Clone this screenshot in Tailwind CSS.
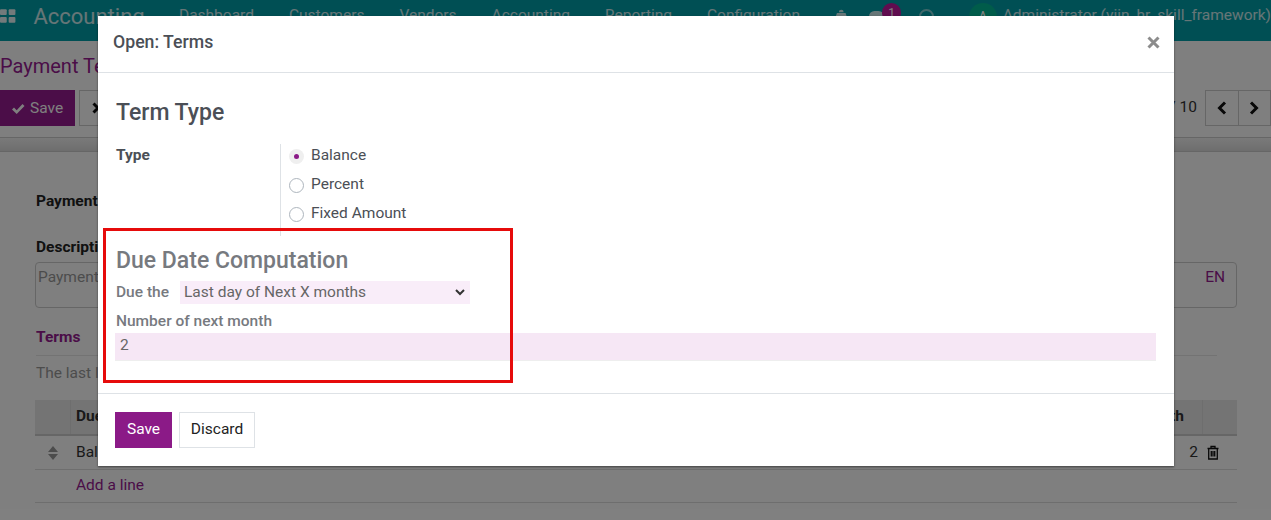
<!DOCTYPE html>
<html lang="en">

<head>
  <meta charset="UTF-8">
  <meta name="viewport" content="width=device-width, initial-scale=1.0">
  <script src="https://cdn.jsdelivr.net/npm/@tailwindcss/browser@4"></script>
  <title>Open: Terms</title>
</head>

<body class="font-['Roboto',sans-serif] text-[15.5px] text-[#4b4f56] bg-white">
  <div class="relative w-[1271px] h-[520px] overflow-hidden">

    <!-- page behind the dialog -->
    <header class="flex items-center h-[41px] bg-[#009ea9] text-white/80 pb-[9px]">
      <svg class="w-[17px] h-[14px] text-white/90" viewBox="0 0 17 14" fill="currentColor">
        <rect x="0" y="0" width="7" height="6" rx="1" />
        <rect x="9" y="0" width="7" height="6" rx="1" />
        <rect x="0" y="8" width="7" height="6" rx="1" />
        <rect x="9" y="8" width="7" height="6" rx="1" />
      </svg>
      <span class="ml-[17px] text-[22px] w-[146px]">Accounting</span>
      <nav class="flex gap-[35px] ml-[5px]">
        <span>Dashboard</span>
        <span>Customers</span>
        <span>Vendors</span>
        <span>Accounting</span>
        <span>Reporting</span>
        <span>Configuration</span>
      </nav>
      <svg class="ml-[35px] w-[13px] h-[14px] text-white/80" viewBox="0 0 13 14" fill="currentColor"><path d="M4 3a2.500 2.500 0 0 1 5 0zM2 4h9l1 3-1 1 1 3-2 0-1.500 2h-4L3 11H1l1-3-1-1z" /></svg>
      <span class="ml-[22px] w-[15px] h-[11px] rounded-full bg-white/80"></span>
      <span class="ml-[-2px] w-[20px] h-[20px] mt-[-6px] rounded-full bg-[#c0189f] text-white text-[12px] flex items-center justify-center">1</span>
      <span class="ml-[18px] w-[15px] h-[15px] rounded-full border-2 border-white/50"></span>
      <span class="ml-[35px] w-[29px] h-[29px] mt-[3px] rounded-full bg-[#00b894] text-white text-[14px] flex items-center justify-center">A</span>
      <span class="ml-[6px] whitespace-nowrap">Administrator (viin_hr_skill_framework)</span>
    </header>

    <section class="h-[110px] bg-white">
      <div class="text-[#961a90] text-[20px] h-[49px] pt-[10px] whitespace-nowrap">Payment Terms</div>
      <div class="flex items-center h-[36px]">
        <span class="flex items-center gap-[5px] h-[36px] w-[75px] pl-[11px] pt-[1px] bg-[#961a90] text-white">
          <svg class="w-[14px] h-[12px]" viewBox="0 0 14 12" fill="currentColor"><path d="M1 6.500l2-2 2.700 2.700L11.500 1l2 2-7.800 8z" /></svg>
          Save
        </span>
        <span class="ml-[4px] flex items-center h-[36px] w-[60px] pl-[12px] border border-[#ccc] bg-white">
          <svg class="w-[12px] h-[12px] text-[#111]" viewBox="0 0 12 12" fill="none" stroke="currentColor" stroke-width="3"><path d="M1.500 1.500l9 9M10.500 1.500l-9 9" /></svg>
        </span>
        <span class="ml-auto text-[#333]">/ 10</span>
        <span class="ml-[8px] flex h-[36px] w-[66px] border border-[#ccc] bg-white text-[#111]">
          <span class="flex-1 flex items-center justify-center border-r border-[#ccc]">
            <svg class="w-[10px] h-[14px]" viewBox="0 0 10 14" fill="none" stroke="currentColor" stroke-width="3"><path d="M8 1.500L2.500 7 8 12.500" /></svg>
          </span>
          <span class="flex-1 flex items-center justify-center">
            <svg class="w-[10px] h-[14px]" viewBox="0 0 10 14" fill="none" stroke="currentColor" stroke-width="3"><path d="M2 1.500L7.500 7 2 12.500" /></svg>
          </span>
        </span>
      </div>
      <div class="mt-[11px] h-[15px] border-y border-[#ccc] bg-[linear-gradient(#f4f4f4,#dcdcdc)]"></div>
    </section>

    <main class="ml-[36px] mr-[34px] pt-[39px]">
      <div class="font-bold text-[#222]">Payment Terms</div>
      <div class="mt-[23px] font-bold text-[#222]">Description</div>
      <div class="ml-[-1px] mt-[2px] h-[46px] flex justify-between border border-[#ccc] rounded-[4px] px-[2px] pt-[3px] text-[#999]">
        <span>Payment terms</span>
        <span class="text-[#961a90] pr-[9px]">EN</span>
      </div>
      <div class="mt-[18px] pb-[6px] font-bold text-[#961a90] border-b border-[#e6e6e6] mr-[20px]">Terms</div>
      <div class="mt-[6px] text-[#999]">The last line's computation type should be Balance</div>
      <div class="ml-[-1px] mt-[15px] flex h-[36px] items-center bg-[#e9e9e9] border-b-2 border-[#ccc] font-bold text-[#333]">
        <span class="w-[36px] h-full border-r border-[#ddd]"></span>
        <span class="ml-[5px]">Due Type</span>
        <span class="ml-auto mr-[-1px]">Number of next month</span>
        <span class="ml-[19px] w-[35px] h-full border-l border-[#ddd]"></span>
      </div>
      <div class="ml-[-1px] flex h-[34px] items-center border-b border-[#ddd] text-[#333]">
        <svg class="ml-[12px] w-[12px] h-[16px] text-[#999]" viewBox="0 0 12 16" fill="currentColor"><path d="M6 1l5 6H1zM1 9h10l-5 6z" /></svg>
        <span class="ml-[17px]">Balance</span>
        <span class="ml-auto">2</span>
        <svg class="ml-[9px] mr-[18px] w-[12px] h-[15px] text-[#111]" viewBox="0 0 12 15" fill="none" stroke="currentColor" stroke-width="1.300"><path d="M0.500 3.500h11M4 3.500V1.500h4v2M1.700 3.500v10.500h8.600v-10.500M4.300 6v5.500M6 6v5.500M7.700 6v5.500" /></svg>
      </div>
      <div class="ml-[-1px] flex h-[33px] items-center border-b border-[#ddd] pl-[41px] text-[#961a90]">Add a line</div>
    </main>

    <!-- backdrop -->
    <div class="absolute inset-0 bg-black/50"></div>

    <!-- dialog -->
    <div class="absolute left-[98px] top-[16px] w-[1076px] h-[450px] bg-white flex flex-col shadow-[0_1px_2px_rgba(0,0,0,0.5)]">
      <div class="flex items-center justify-between h-[57px] shrink-0 border-b border-[#dee2e6] pl-[15px] pr-[14px] pb-[4px]">
        <span class="text-[17.700px] font-medium">Open: Terms</span>
        <svg class="w-[13px] h-[13px] text-[#8c8c8c]" viewBox="0 0 13 13" fill="none" stroke="currentColor" stroke-width="3"><path d="M1.500 1.500l10 10M11.500 1.500l-10 10" /></svg>
      </div>

      <div class="flex-1 pl-[18px] pr-[18px]">
        <div class="mt-[24px] text-[23px] leading-[32px] font-medium">Term Type</div>
        <div class="mt-[15px] flex h-[92px]">
          <div class="w-[164px] font-bold">Type</div>
          <div class="border-l border-[#dee2e6] pl-[8px] flex flex-col gap-[9px] pt-[2px]">
            <label class="flex items-center gap-[7px] h-[20px]">
              <span class="w-[15px] h-[15px] rounded-full bg-[#efefef] flex items-center justify-center"><span class="w-[5px] h-[5px] rounded-full bg-[#8b1a87]"></span></span>
              Balance
            </label>
            <label class="flex items-center gap-[7px] h-[20px]">
              <span class="w-[15px] h-[15px] rounded-full border border-[#adb5bd]"></span>
              Percent
            </label>
            <label class="flex items-center gap-[7px] h-[20px]">
              <span class="w-[15px] h-[15px] rounded-full border border-[#adb5bd]"></span>
              Fixed Amount
            </label>
          </div>
        </div>
        <div class="mt-[9px] text-[23px] leading-[32px] font-medium text-[#777a7f]">Due Date Computation</div>
        <div class="mt-[4px] flex items-center font-medium text-[#777a7f]">
          <span class="w-[64px]">Due the</span>
          <div class="flex items-center justify-between w-[290px] h-[23px] bg-[#f9edf9] pl-[4px] pr-[5px] font-normal text-[#666]">
            Last day of Next X months
            <svg class="w-[10px] h-[7px] text-[#333]" viewBox="0 0 10 7" fill="none" stroke="currentColor" stroke-width="2"><path d="M1 1l4 4 4-4" /></svg>
          </div>
        </div>
        <div class="mt-[6px] font-medium text-[#777a7f]">Number of next month</div>
        <div class="ml-[-1px] mt-[-1px] h-[28px] flex items-center bg-[#f6e7f5] border-b border-[#eee] pl-[5px] text-[#666]">2</div>
      </div>

      <div class="flex items-center h-[73px] shrink-0 border-t border-[#dee2e6] pl-[17px] gap-[7px] pb-[1px]">
        <button class="w-[57px] h-[36px] bg-[#8b1a87] text-white">Save</button>
        <button class="w-[76px] h-[36px] border border-[#dee2e6] text-[#222]">Discard</button>
      </div>
    </div>

    <!-- red annotation frame -->
    <div class="absolute left-[103px] top-[228px] w-[410px] h-[155px] border-[3px] border-[#e60b0b]"></div>
  </div>
</body>

</html>
